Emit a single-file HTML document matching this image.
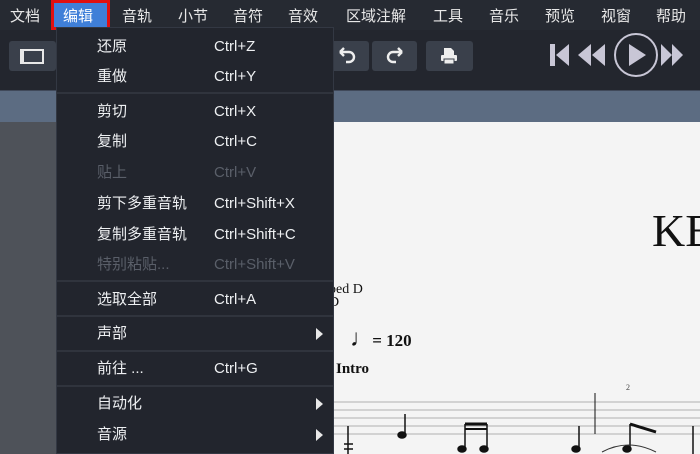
<!DOCTYPE html>
<html><head><meta charset="utf-8"><style>
*{margin:0;padding:0;box-sizing:border-box}
body{width:700px;height:454px;overflow:hidden;position:relative;background:#23262e;font-family:"Liberation Sans","Noto Sans CJK SC",sans-serif;}
.abs{position:absolute}
.mb{top:0;left:0;width:700px;height:30px;background:#262a32;color:#e8e8e8;font-size:15px}
.mb span{position:absolute;top:5px}
.tb{top:30px;left:0;width:700px;height:60px;background:#23262e}
.btn{position:absolute;background:#3a404b;border-radius:3px}
.band{top:90px;left:0;width:700px;height:32px;background:#5c6c82;border-top:1px solid #40495a}
.left{top:122px;left:0;width:334px;height:332px;background:#4e5259}
.page{top:122px;left:334px;width:366px;height:332px;background:#f4f4f4}
.menu{top:27px;left:56px;width:278px;height:427px;background:#22252d;border:1px solid #333843;color:#eef0f2;font-size:15px}
.it,.sc{position:absolute;line-height:20px;height:20px;white-space:nowrap}
.it{left:40px}
.sc{left:157px}
.dis{color:#5a5f69}
.sep{position:absolute;left:0;width:276px;height:2px;background:#30343d}
.arr{position:absolute;left:259px;width:0;height:0;border-top:6px solid transparent;border-bottom:6px solid transparent;border-left:7px solid #e8e8e8}
</style></head><body>
<div class="abs mb">
<span style="left:10px">文档</span>
<div class="abs" style="left:51px;top:0;width:59px;height:30px;border:3px solid #e01010;background:#3f7fd8"></div>
<span style="left:63px;color:#fff">编辑</span>
<span style="left:122px">音轨</span>
<span style="left:178px">小节</span>
<span style="left:233px">音符</span>
<span style="left:288px">音效</span>
<span style="left:346px">区域注解</span>
<span style="left:433px">工具</span>
<span style="left:489px">音乐</span>
<span style="left:545px">预览</span>
<span style="left:601px">视窗</span>
<span style="left:656px">帮助</span>
</div>
<div class="abs tb">
<div class="btn" style="left:9px;top:11px;width:47px;height:30px"><div class="abs" style="left:11px;top:8px;width:24px;height:15px;border:2px solid #e8e8e8;border-left-width:4px"></div></div>
<div class="btn" style="left:326px;top:11px;width:43px;height:30px"><svg class="abs" style="left:8px;top:5px" width="24" height="20" viewBox="0 0 24 20"><path d="M6 6h9a5 5 0 0 1 0 10h-3M6 6l4-4M6 6l4 4" stroke="#eee" stroke-width="2.4" fill="none"/></svg></div>
<div class="btn" style="left:372px;top:11px;width:45px;height:30px"><svg class="abs" style="left:12px;top:5px" width="24" height="20" viewBox="0 0 24 20"><path d="M18 6H9a5 5 0 0 0 0 10h3M18 6l-4-4M18 6l-4 4" stroke="#eee" stroke-width="2.4" fill="none"/></svg></div>
<div class="btn" style="left:426px;top:11px;width:47px;height:30px"><svg class="abs" style="left:13px;top:5px" width="20" height="20" viewBox="0 0 20 20"><path d="M5 2h7l3 3v4H5z" fill="#eee"/><rect x="2" y="9" width="16" height="6" rx="1" fill="#eee"/><rect x="5" y="13" width="10" height="5" fill="#eee" stroke="#3a404b"/></svg></div>
<svg class="abs" style="left:545px;top:0" width="155" height="60" viewBox="0 0 155 60"><g fill="#c8c6d6"><rect x="5" y="14" width="5" height="22"/><path d="M11 25L24 14v22z"/><path d="M33 25L46 14v22zM47 25L60 14v22z"/><path d="M116 14l11 11-11 11zM127 14l11 11-11 11z"/><path d="M84 14v22l17-11z"/></g><circle cx="91" cy="25" r="21" fill="none" stroke="#c8c6d6" stroke-width="2"/></svg>
</div>
<div class="abs band"></div>
<div class="abs left"></div>
<div class="abs page">
<div class="abs" style="left:318px;top:82px;font:46px 'Liberation Serif',serif;color:#111">KE</div>
<div class="abs" style="left:-5px;top:161px;font:14px/13px 'Liberation Serif',serif;color:#111">ped D<br>D</div>
<div class="abs" style="left:16px;top:204px;font:bold 17px 'Liberation Serif',serif;color:#111"><span style="font-size:24px;font-weight:normal;margin-right:-6px">♩</span> = 120</div>
<div class="abs" style="left:2px;top:239px;font:bold 15px 'Liberation Serif',serif;color:#111">Intro</div>
<svg class="abs" style="left:0;top:260px" width="366" height="72"><g stroke="#b0b0b0" stroke-width="1"><line x1="0" y1="20" x2="366" y2="20"/><line x1="0" y1="28" x2="366" y2="28"/><line x1="0" y1="36" x2="366" y2="36"/><line x1="0" y1="44" x2="366" y2="44"/><line x1="0" y1="52" x2="366" y2="52"/></g>
<g stroke="#111" stroke-width="1.5" fill="#111"><line x1="14" y1="44" x2="14" y2="72"/><line x1="10" y1="62" x2="19" y2="62"/><line x1="10" y1="67" x2="19" y2="67"/><line x1="71" y1="52" x2="71" y2="32"/><ellipse cx="68" cy="53" rx="4" ry="3"/><line x1="131" y1="66" x2="131" y2="42"/><line x1="153" y1="66" x2="153" y2="42"/><line x1="131" y1="42" x2="153" y2="42" stroke-width="3"/><line x1="131" y1="47" x2="153" y2="47" stroke-width="2"/><ellipse cx="128" cy="67" rx="4" ry="3"/><ellipse cx="150" cy="67" rx="4" ry="3"/><line x1="261" y1="11" x2="261" y2="52" stroke-width="1"/><line x1="296" y1="66" x2="296" y2="42"/><line x1="296" y1="42" x2="322" y2="50" stroke-width="3"/><ellipse cx="293" cy="67" rx="4" ry="3"/><line x1="245" y1="66" x2="245" y2="44"/><ellipse cx="242" cy="67" rx="4" ry="3"/><line x1="359" y1="44" x2="359" y2="72"/></g>
<text x="292" y="8" font-size="8" fill="#444" font-family="Liberation Serif">2</text>
<path d="M268 70q26-14 54 0" stroke="#333" fill="none"/></svg>
</div>
<div class="abs menu">
<span class="it" style="top:9px">还原</span><span class="sc" style="top:9px">Ctrl+Z</span>
<span class="it" style="top:39px">重做</span><span class="sc" style="top:39px">Ctrl+Y</span>
<div class="sep" style="top:64px"></div>
<span class="it" style="top:74px">剪切</span><span class="sc" style="top:74px">Ctrl+X</span>
<span class="it" style="top:104px">复制</span><span class="sc" style="top:104px">Ctrl+C</span>
<span class="it dis" style="top:135px">贴上</span><span class="sc dis" style="top:135px">Ctrl+V</span>
<span class="it" style="top:166px">剪下多重音轨</span><span class="sc" style="top:166px">Ctrl+Shift+X</span>
<span class="it" style="top:197px">复制多重音轨</span><span class="sc" style="top:197px">Ctrl+Shift+C</span>
<span class="it dis" style="top:227px">特别粘贴...</span><span class="sc dis" style="top:227px">Ctrl+Shift+V</span>
<div class="sep" style="top:252px"></div>
<span class="it" style="top:262px">选取全部</span><span class="sc" style="top:262px">Ctrl+A</span>
<div class="sep" style="top:287px"></div>
<span class="it" style="top:296px">声部</span><div class="arr" style="top:300px"></div>
<div class="sep" style="top:322px"></div>
<span class="it" style="top:331px">前往 ...</span><span class="sc" style="top:331px">Ctrl+G</span>
<div class="sep" style="top:357px"></div>
<span class="it" style="top:366px">自动化</span><div class="arr" style="top:370px"></div>
<span class="it" style="top:397px">音源</span><div class="arr" style="top:401px"></div>
</div>
</body></html>
